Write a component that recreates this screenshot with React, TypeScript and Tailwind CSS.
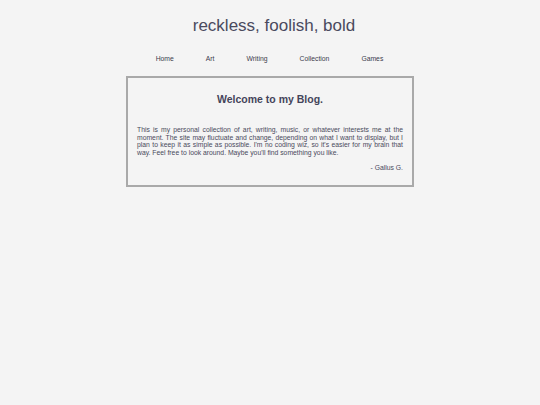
export default function App() {
  const links = ["Home", "Art", "Writing", "Collection", "Games"];
  return (
    <div className="min-h-[405px] w-full bg-[#f4f4f4] text-[#46465a]" style={{ fontFamily: '"Liberation Sans", Arial, sans-serif' }}>
      <div className="flex flex-col items-center">
        <h1 className="pl-[8px] pt-[15px] text-[17px] leading-[22px] text-[#4a4a5e]">reckless, foolish, bold</h1>
        <nav className="-ml-[1px] mt-[17px] flex gap-[32px] text-[6.8px] leading-[10px] text-[#3c3c4c]">
          {links.map((l) => (
            <a key={l} href="#">{l}</a>
          ))}
        </nav>
        <div className="mt-[12px] w-[288px] border-2 border-[#a9a9a9] px-[9px] pb-[13px] pt-[14px]">
          <h2 className="text-center text-[10.5px] font-bold leading-[14px] text-[#44445a]">Welcome to my Blog.</h2>
          <p className="mt-[20px] text-justify text-[6.8px] leading-[7.7px] text-[#4a4a5c]">
            This is my personal collection of art, writing, music, or whatever interests me at the moment. The site may fluctuate and change, depending on what I want to display, but I plan to keep it as simple as possible. I'm no coding wiz, so it's easier for my brain that way. Feel free to look around. Maybe you'll find something you like.
          </p>
          <p className="mt-[7px] text-right text-[6.8px] leading-[8px] text-[#4a4a5c]">- Gallus G.</p>
        </div>
      </div>
    </div>
  );
}
